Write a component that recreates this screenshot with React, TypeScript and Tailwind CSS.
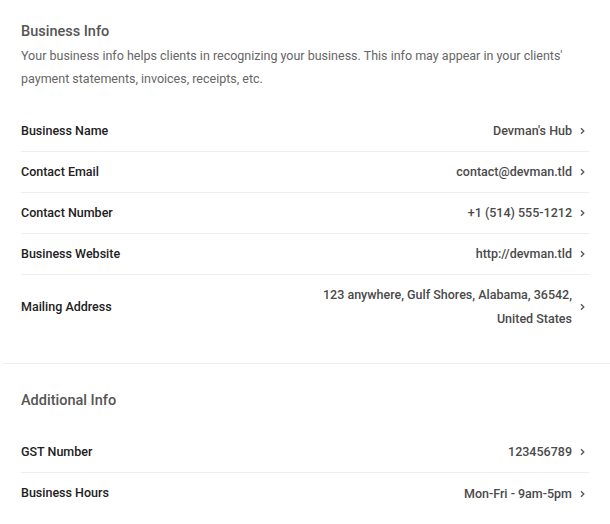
import React from 'react'

interface Row {
  label: string
  value: React.ReactNode
  tall?: boolean
}

const businessRows: Row[] = [
  { label: 'Business Name', value: "Devman's Hub" },
  { label: 'Contact Email', value: 'contact@devman.tld' },
  { label: 'Contact Number', value: '+1 (514) 555-1212' },
  { label: 'Business Website', value: 'http://devman.tld' },
  {
    label: 'Mailing Address',
    value: (
      <>
        123 anywhere, Gulf Shores, Alabama, 36542,
        <br />
        United States
      </>
    ),
    tall: true,
  },
]

const additionalRows: Row[] = [
  { label: 'GST Number', value: '123456789' },
  { label: 'Business Hours', value: 'Mon-Fri - 9am-5pm' },
]

function Chevron() {
  return (
    <svg width="5" height="8" viewBox="0 0 5 8" className="shrink-0 text-[#555]">
      <path d="M1 1.2 L3.8 4 L1 6.8" fill="none" stroke="currentColor" strokeWidth="1.3" />
    </svg>
  )
}

function InfoRow({ row, last }: { row: Row; last: boolean }) {
  return (
    <div
      className={`flex items-center justify-between ${row.tall ? 'py-2' : 'h-[41px]'} ${
        last ? '' : 'border-b border-[#eeeeee]'
      }`}
    >
      <div className="text-[12.5px] font-medium text-[#212121]">{row.label}</div>
      <div className="flex items-center gap-[8px] pr-[4px]">
        <div className="text-right text-[12.5px] font-medium leading-6 text-[#4a4a4a]">{row.value}</div>
        <Chevron />
      </div>
    </div>
  )
}

export default function App() {
  return (
    <div className="min-h-screen bg-white" style={{ fontFamily: 'Roboto, "Liberation Sans", sans-serif' }}>
      {/* Business info */}
      <div className="px-[21px] pt-[22px] pb-[24px]">
        <h2 className="text-[14.5px] font-medium leading-5 text-[#555555]">Business Info</h2>
        <p className="mt-[2px] text-[12.5px] leading-[23px] text-[#666666]">
          Your business info helps clients in recognizing your business. This info may appear in your clients'
          payment statements, invoices, receipts, etc.
        </p>
        <div className="mt-[21px]">
          {businessRows.map((r, i) => (
            <InfoRow key={r.label} row={r} last={i === businessRows.length - 1} />
          ))}
        </div>
      </div>

      <div className="ml-[2px] border-t border-[#eeeeee]" />

      {/* Additional info */}
      <div className="px-[21px] pt-[27px]">
        <h2 className="text-[14.5px] font-medium leading-5 text-[#555555]">Additional Info</h2>
        <div className="mt-[21px]">
          {additionalRows.map((r, i) => (
            <InfoRow key={r.label} row={r} last={i === additionalRows.length - 1} />
          ))}
        </div>
      </div>
    </div>
  )
}
